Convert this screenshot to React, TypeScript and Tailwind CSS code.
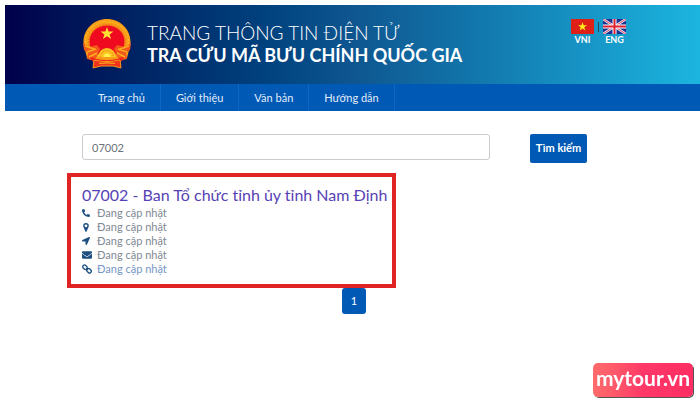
import { useState } from 'react'
import { FaEnvelope, FaLocationArrow, FaPhone } from 'react-icons/fa'

const menu = ['Trang chủ', 'Giới thiệu', 'Văn bản', 'Hướng dẫn']

function MarkerIcon() {
  return (
    <svg viewBox="0 0 10 16" className="ml-px h-[9px] w-[6px]" aria-hidden="true">
      <path
        fillRule="evenodd"
        fill="currentColor"
        d="M5 0a5 5 0 0 1 5 5c0 1-.3 1.800-.7 2.600L6 15.200a1.100 1.100 0 0 1-2 0L.7 7.600C.3 6.800 0 6 0 5a5 5 0 0 1 5-5zm0 2.500a2.500 2.500 0 1 0 0 5 2.500 2.500 0 0 0 0-5z"
      />
    </svg>
  )
}

function ChainIcon() {
  return (
    <svg viewBox="0 0 20 20" className="size-[10px]" fill="none" stroke="currentColor" strokeWidth="2.600" aria-hidden="true">
      <rect x="1" y="3" width="10" height="7" rx="3.500" transform="rotate(45 6 6.500)" />
      <rect x="9" y="10" width="10" height="7" rx="3.500" transform="rotate(45 14 13.500)" />
      <path d="M8.500 8.500l3.500 3.500" />
    </svg>
  )
}

const details = [
  { id: 'phone', icon: <FaPhone className="size-2 -scale-x-100" />, text: 'Đang cập nhật' },
  { id: 'address', icon: <MarkerIcon />, text: 'Đang cập nhật' },
  { id: 'direction', icon: <FaLocationArrow className="size-2" />, text: 'Đang cập nhật' },
  { id: 'mail', icon: <FaEnvelope className="size-[10px]" />, text: 'Đang cập nhật' },
  { id: 'site', icon: <ChainIcon />, text: 'Đang cập nhật', link: true },
]

function Emblem() {
  return (
    <svg viewBox="0 0 50 50" className="size-[50px] shrink-0" aria-hidden="true">
      {/* wreath */}
      <path d="M25 0C38 0 48.500 10 48.500 23c0 3-.5 5-1.500 8l-2 8-8 3H13l-8-3-2-8c-1-3-1.500-5-1.500-8C1.500 10 12 0 25 0z" fill="#f79a18" />
      <path d="M4 27C1 13 12 2.500 25 2.500S49 13 46 27" fill="none" stroke="#fcb91f" strokeWidth="1.500" strokeDasharray="2 1.200" />
      <path d="M7 27C5 15 14 5.500 25 5.500S45 15 43 27" fill="none" stroke="#ee6a1a" strokeWidth="1" strokeDasharray="1.500 1.500" />
      <path d="M25 6.500c10 0 17.500 7 17.500 16 0 5-1.500 9-5 13h-25c-3.500-4-5-8-5-13 0-9 7.500-16 17.500-16z" fill="#f00a20" />
      {/* ribbon and rice ears */}
      <path d="M1 24l6 4 8-2 3 4-3 6-2 6-8-2 1-6-4-3z" fill="#f4571b" />
      <path d="M49 24l-6 4-8-2-3 4 3 6 2 6 8-2-1-6 4-3z" fill="#f4571b" />
      <path d="M3 27l9 3M5 33l9-3M7 38l8-4M47 27l-9 3M45 33l-9-3M43 38l-8-4" stroke="#fbae1e" strokeWidth="1.500" />
      <path d="M25 8l1.600 4.500h4.900l-3.900 2.900 1.500 4.600-4.100-2.800-4.100 2.800 1.500-4.600-3.900-2.900h4.900z" fill="#ffe033" />
      {/* cog */}
      <path d="M16 38a9 9 0 1 1 18 0z" fill="#fdc522" />
      <path d="M18.500 38a6.500 6.500 0 1 1 13 0" fill="none" stroke="#f28a1c" strokeWidth="1.200" strokeDasharray="1.500 1" />
      <path d="M21.500 38a3.500 3.500 0 1 1 7 0z" fill="#fff04a" />
      <path d="M8 38l6 2c7 1.500 15 1.500 22 0l6-2-3 5c-9 2-19 2-28 0z" fill="#f01c1c" />
      <path d="M12 41c8 2 18 2 26 0l1 8c-3-.5-5-1.500-8-2H19c-3 .5-5 1.500-8 2z" fill="#f2331c" stroke="#f8961c" />
      <path d="M17 44.500c5-.8 11-.8 16 0" fill="none" stroke="#f9a61f" strokeWidth="1.200" />
    </svg>
  )
}

function FlagVietnam() {
  return (
    <svg viewBox="0 0 23 15" className="h-[15px] w-[23px]" aria-hidden="true">
      <path d="M0 0h23v15H0z" fill="#de2017" />
      <path d="M11.500 3l1.100 3.200H16l-2.700 2 1 3.300-2.800-2-2.800 2 1-3.300-2.700-2h3.400z" fill="#ffee1a" />
    </svg>
  )
}

function FlagBritain() {
  return (
    <svg viewBox="0 0 23 15" className="h-[15px] w-[23px]" aria-hidden="true">
      <path d="M0 0h23v15H0z" fill="#1d3290" />
      <path d="M0 0l23 15M23 0L0 15" stroke="#e8ecf6" strokeWidth="2.400" />
      <path d="M0 0l23 15M23 0L0 15" stroke="#e0465a" strokeWidth="1" />
      <path d="M11.500 0v15M0 7.500h23" stroke="#fff" strokeWidth="4" />
      <path d="M11.500 0v15M0 7.500h23" stroke="#dd1f30" strokeWidth="2" />
    </svg>
  )
}

function Header() {
  return (
    <header>
      <div className="flex items-start bg-linear-to-r from-[#00004a] via-[#0f5690] to-[#1cb5e0] pt-[14px] pr-[74px] pb-[15px] pl-[77px]">
        <Emblem />
        <h1 className="ml-[15px] flex-1 pt-[2px] leading-[23px] text-white">
          <span className="block text-[19px] font-light">TRANG THÔNG TIN ĐIỆN TỬ</span>
          <span className="block text-[18px] font-bold">TRA CỨU MÃ BƯU CHÍNH QUỐC GIA</span>
        </h1>
        <div className="flex text-[9px] leading-[12px] font-bold text-white">
          <a href="#vni" className="flex flex-col items-center">
            <FlagVietnam />
            VNI
          </a>
          <span className="mx-[4px] mt-[3px] h-[10px] w-px bg-[#24455e]" />
          <a href="#eng" className="flex flex-col items-center">
            <FlagBritain />
            ENG
          </a>
        </div>
      </div>
      <nav className="flex bg-[#0059b5] pl-[77px] text-[11px] leading-[27px] text-[#e3edf8]">
        {menu.map((item) => (
          <a key={item} href="#menu" className="border-r border-[#0a68c6] px-[15px] first:pl-4">
            {item}
          </a>
        ))}
      </nav>
    </header>
  )
}

function Result() {
  return (
    <section className="-ml-[15px] w-[329px] border-4 border-[#e02424] px-[11px] pt-[6px] pb-[8px]">
      <h2 className="text-[16px] leading-[23px] whitespace-nowrap">
        <a href="#result" className="text-[#5642b5]">07002 - Ban Tổ chức tỉnh ủy tỉnh Nam Định</a>
      </h2>
      <ul className="text-[11px] leading-[14px] text-[#7f8993]">
        {details.map((row) => (
          <li key={row.id} className="flex items-center">
            <span className="flex w-[15px] text-[#1d4f80]">{row.icon}</span>
            {row.link ? <a href="#site" className="text-[#7595c4]">{row.text}</a> : row.text}
          </li>
        ))}
      </ul>
    </section>
  )
}

function App() {
  const [query, setQuery] = useState('07002')

  return (
    <div className="min-h-screen bg-white pt-[5px] pl-[5px] font-['Lato','Noto_Sans',sans-serif]">
      <Header />
      <main className="pt-[23px] pr-[74px] pl-[77px]">
        <form className="flex items-start pr-[39px]" onSubmit={(e) => e.preventDefault()}>
          <input
            type="text"
            aria-label="Mã bưu chính"
            value={query}
            onChange={(e) => setQuery(e.target.value)}
            className="h-[26px] min-w-0 flex-1 rounded-[3px] border border-[#cccccc] px-[9px] text-[11px] text-[#6c7278] outline-none"
          />
          <button type="submit" className="ml-10 h-[29px] w-[57px] rounded-[2px] bg-[#0059b5] text-[11px] font-bold whitespace-nowrap text-white">
            Tìm kiếm
          </button>
        </form>
        <div className="pt-[10px]">
          <Result />
        </div>
        <div className="flex justify-center">
          <button type="button" className="h-[26px] w-6 rounded-[3px] bg-[#0059b5] text-[11px] text-white">1</button>
        </div>
      </main>
      <div className="fixed right-[7px] bottom-[8px] flex h-[34px] w-[100px] justify-center rounded-[5px] bg-linear-to-r from-[#ff6b6b] via-[#ff3868] to-[#ff2d63] text-[21px] leading-[30px] font-bold text-white shadow-[1px_1px_0_#555]">
        mytour.vn
      </div>
    </div>
  )
}

export default App
